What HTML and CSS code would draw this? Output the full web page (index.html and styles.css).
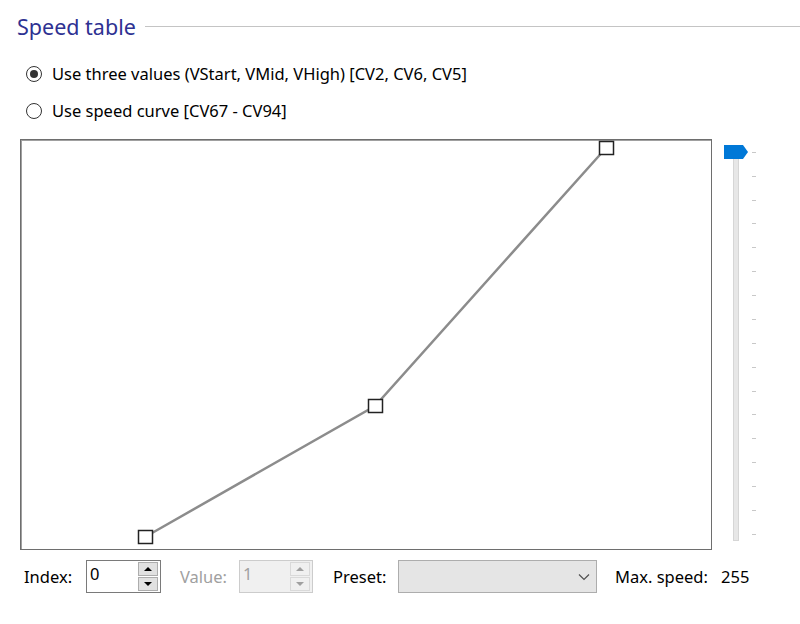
FILE: index.html
```html
<!DOCTYPE html>
<html>
<head>
<meta charset="utf-8">
<link rel="stylesheet" href="styles.css">
</head>
<body>
<div class="page">
  <div class="group-title">
    <span class="title-text">Speed table</span>
    <span class="title-line"></span>
  </div>
  <div class="radios">
    <label class="radio"><span class="dot checked"></span><span>Use three values (VStart, VMid, VHigh) [CV2, CV6, CV5]</span></label>
    <label class="radio"><span class="dot"></span><span>Use speed curve [CV67 - CV94]</span></label>
  </div>
  <div class="chart-row">
    <div class="chart">
      <svg width="690" height="409" viewBox="0 0 690 409">
        <polyline points="124,397 354,266 585,8" fill="none" stroke="#8c8c8c" stroke-width="2.5"/>
        <rect x="117.5" y="390.5" width="14" height="13" fill="#fff" stroke="#222" stroke-width="1.5"/>
        <rect x="347.5" y="259.5" width="14" height="13" fill="#fff" stroke="#222" stroke-width="1.5"/>
        <rect x="578.5" y="1.5" width="14" height="13" fill="#fff" stroke="#222" stroke-width="1.5"/>
      </svg>
    </div>
    <div class="slider">
      <svg width="40" height="404" viewBox="0 0 40 404">
        <rect x="9.5" y="14.5" width="5" height="387" fill="#e7e7e7" stroke="#d6d6d6"/>
        <g stroke="#c8c8c8" stroke-width="1">
          <line x1="28" y1="13.5" x2="32" y2="13.5"/>
          <line x1="28" y1="37.5" x2="32" y2="37.5"/>
          <line x1="28" y1="61.5" x2="32" y2="61.5"/>
          <line x1="28" y1="84.5" x2="32" y2="84.5"/>
          <line x1="28" y1="108.5" x2="32" y2="108.5"/>
          <line x1="28" y1="132.5" x2="32" y2="132.5"/>
          <line x1="28" y1="156.5" x2="32" y2="156.5"/>
          <line x1="28" y1="180.5" x2="32" y2="180.5"/>
          <line x1="28" y1="204.5" x2="32" y2="204.5"/>
          <line x1="28" y1="228.5" x2="32" y2="228.5"/>
          <line x1="28" y1="252.5" x2="32" y2="252.5"/>
          <line x1="28" y1="275.5" x2="32" y2="275.5"/>
          <line x1="28" y1="299.5" x2="32" y2="299.5"/>
          <line x1="28" y1="323.5" x2="32" y2="323.5"/>
          <line x1="28" y1="347.5" x2="32" y2="347.5"/>
          <line x1="28" y1="371.5" x2="32" y2="371.5"/>
          <line x1="28" y1="395.5" x2="32" y2="395.5"/>
        </g>
        <path d="M0,6 H19 L24,13 L19,20 H0 Z" fill="#0078d7"/>
      </svg>
    </div>
  </div>
  <div class="controls">
    <span class="lbl l-index">Index:</span>
    <div class="spin">
      <span class="spin-val">0</span>
      <span class="spin-btns">
        <span class="sb up"></span>
        <span class="sb down"></span>
      </span>
    </div>
    <span class="lbl l-value">Value:</span>
    <div class="spin disabled">
      <span class="spin-val">1</span>
      <span class="spin-btns">
        <span class="sb up"></span>
        <span class="sb down"></span>
      </span>
    </div>
    <span class="lbl l-preset">Preset:</span>
    <div class="combo">
      <svg width="12" height="8" viewBox="0 0 12 8"><path d="M1,1.5 L6,6.5 L11,1.5" fill="none" stroke="#505050" stroke-width="1.2"/></svg>
    </div>
    <span class="lbl l-max">Max. speed:</span>
    <span class="lbl">255</span>
  </div>
</div>
</body>
</html>
```

FILE: styles.css
```css
html, body {
  margin: 0;
  padding: 0;
  background: #fff;
}
body {
  font-family: "Noto Sans", "Open Sans", sans-serif;
  font-size: 16.5px;
  color: #000;
  width: 800px;
  height: 624px;
  overflow: hidden;
}
.page {
  padding: 12px 0 0 0;
}
.group-title {
  display: flex;
  align-items: center;
  height: 30px;
  padding-left: 17px;
}
.title-text {
  font-size: 21.5px;
  color: #2e3192;
  line-height: 30px;
}
.title-line {
  flex: 1;
  height: 1px;
  background: #c4c4c4;
  margin-left: 9px;
  margin-top: -2px;
}
.radios {
  display: flex;
  flex-direction: column;
  gap: 17px;
  padding: 22px 0 0 26px;
}
.radio {
  display: flex;
  align-items: center;
  gap: 10px;
  height: 20px;
  line-height: 20px;
}
.dot {
  width: 16px;
  height: 16px;
  border: 1.3px solid #333;
  border-radius: 50%;
  box-sizing: border-box;
  display: flex;
  align-items: center;
  justify-content: center;
}
.dot.checked::after {
  content: "";
  width: 8px;
  height: 8px;
  border-radius: 50%;
  background: #333;
}
.chart-row {
  display: flex;
  padding: 18px 0 0 20px;
  align-items: flex-start;
}
.chart {
  width: 690px;
  height: 409px;
  border: 1px solid #6e6e6e;
  box-shadow: inset 1px 1px 0 #a0a0a0;
  background: #fff;
}
.chart svg {
  display: block;
}
.slider {
  margin-left: 12px;
  padding-top: 0;
}
.slider svg {
  display: block;
}
.controls {
  display: flex;
  align-items: center;
  padding: 10px 0 0 24px;
  height: 33px;
}
.lbl {
  line-height: 20px;
}
.l-index {
  width: 62px;
}
.l-value {
  color: #a0a0a0;
  margin-left: 19px;
  width: 59px;
}
.l-preset {
  margin-left: 20px;
  width: 65px;
}
.l-max {
  margin-left: 18px;
  width: 106px;
}
.spin {
  width: 75px;
  height: 33px;
  box-sizing: border-box;
  border: 1px solid #7a7a7a;
  display: flex;
  align-items: center;
  justify-content: space-between;
  padding: 0 2px 0 3px;
  background: #fff;
}
.spin.disabled {
  width: 74px;
  border-color: #cccccc;
  background: #f0f0f0;
  color: #a0a0a0;
}
.spin-val {
  align-self: flex-start;
  line-height: 26px;
}
.spin-btns {
  display: flex;
  flex-direction: column;
  gap: 1px;
  width: 20px;
}
.sb {
  height: 14px;
  background: #e1e1e1;
  border: 1px solid #adadad;
  box-sizing: border-box;
  position: relative;
}
.spin.disabled .sb {
  background: #f0f0f0;
  border-color: #d9d9d9;
}
.sb::after {
  content: "";
  position: absolute;
  left: 5px;
  width: 0;
  height: 0;
  border-left: 4px solid transparent;
  border-right: 4px solid transparent;
}
.sb.up::after {
  top: 4px;
  border-bottom: 4px solid #000;
}
.sb.down::after {
  top: 4px;
  border-top: 4px solid #000;
}
.spin.disabled .sb.up::after {
  border-bottom-color: #a0a0a0;
}
.spin.disabled .sb.down::after {
  border-top-color: #a0a0a0;
}
.combo {
  width: 199px;
  height: 33px;
  box-sizing: border-box;
  border: 1px solid #adadad;
  background: #e5e5e5;
  display: flex;
  align-items: center;
  justify-content: flex-end;
  padding-right: 6px;
}
.combo svg {
  display: block;
}
```
